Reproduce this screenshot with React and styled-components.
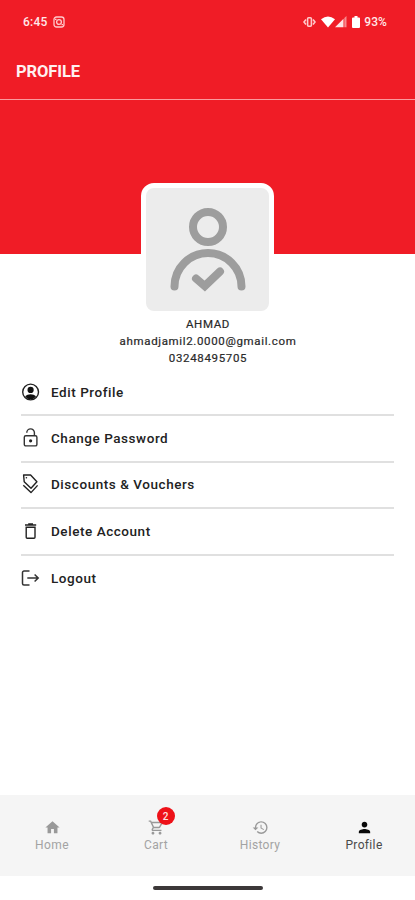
import React from 'react';
import styled, { createGlobalStyle } from 'styled-components';

const GlobalStyle = createGlobalStyle`
  * { box-sizing: border-box; }
  body { margin: 0; background: #fff; font-family: Roboto, sans-serif; }
`;

const Screen = styled.div`
  width: 415px;
  height: 900px;
  display: flex;
  flex-direction: column;
  background: #fff;
  overflow: hidden;
`;

const StatusBar = styled.div`
  height: 43px;
  flex: none;
  display: flex;
  align-items: center;
  justify-content: space-between;
  padding: 0 28px 0 23px;
  background: #f01c26;
  color: #ffe9e9;
  font-size: 12px;
  font-weight: 500;
`;

const StatusGroup = styled.div`
  display: flex;
  align-items: center;
`;

const StatusIcon = styled.svg`
  display: block;
  flex: none;
  margin-right: ${(p) => p.$gap || 0}px;
`;

const Clock = styled.span`
  letter-spacing: 0.2px;
  margin-right: 6px;
`;

const Battery = styled.span`
  letter-spacing: 0.1px;
`;

const Header = styled.header`
  height: 57px;
  flex: none;
  display: flex;
  align-items: center;
  padding: 1px 16px 0;
  background: #f01c26;
  border-bottom: 1px solid #fb9a9d;
`;

const Title = styled.h1`
  margin: 0;
  color: #fff0f0;
  font-size: 16.5px;
  line-height: 20px;
  font-weight: 700;
  letter-spacing: -0.1px;
`;

const Banner = styled.div`
  height: 154px;
  flex: none;
  background: #f01c26;
`;

const Identity = styled.section`
  display: flex;
  flex-direction: column;
  align-items: center;
  margin-top: -71px;
`;

const Avatar = styled.div`
  width: 133px;
  height: 133px;
  border: 5px solid #fff;
  border-radius: 13px;
  background: #ececec;
`;

const IdentityText = styled.p`
  margin: 0;
  padding-left: 1px;
  color: #2a2a2a;
  font-size: 11.5px;
  line-height: 17px;
  letter-spacing: ${(p) => p.$tracking}px;
  -webkit-text-stroke: 0.2px #2a2a2a;
`;

const Menu = styled.nav`
  display: flex;
  flex-direction: column;
  padding: 0 21px;
  margin-top: 3px;
`;

const MenuRow = styled.a`
  height: 46.4px;
  display: flex;
  align-items: center;
  gap: 11px;
  padding-bottom: 1px;
  color: #222;
  font-size: 13.5px;
  font-weight: 500;
  letter-spacing: 0.55px;
  border-bottom: ${(p) => (p.$last ? 'none' : '2px solid #e0e0e0')};
`;

const MenuIcon = styled.svg`
  width: 19px;
  height: 20px;
  flex: none;
  overflow: visible;
`;

const TabBar = styled.nav`
  height: 81px;
  flex: none;
  margin-top: auto;
  display: grid;
  grid-template-columns: repeat(4, 104px);
  background: #f5f5f5;
`;

const Tab = styled.a`
  display: flex;
  flex-direction: column;
  align-items: center;
  padding-top: 24px;
  color: ${(p) => (p.$active ? '#4a4a4a' : '#a3a3a3')};
  font-size: 12px;
  line-height: 16px;
  letter-spacing: ${(p) => p.$tracking}px;
`;

const TabIconWrap = styled.span`
  position: relative;
  height: 18px;
`;

const TabIcon = styled.svg`
  display: block;
  width: 17px;
  height: 17px;
  color: ${(p) => (p.$active ? '#080808' : '#999')};
`;

const Badge = styled.span`
  position: absolute;
  left: 9px;
  top: -12px;
  width: 18px;
  height: 18px;
  border-radius: 50%;
  background: #ee1118;
  color: #ffe0e0;
  font-size: 10px;
  font-weight: 500;
  line-height: 19px;
  letter-spacing: 0;
  text-align: center;
`;

const GestureArea = styled.div`
  height: 24px;
  flex: none;
  display: flex;
  align-items: center;
  justify-content: center;
`;

const GestureHandle = styled.div`
  width: 110px;
  height: 4px;
  border-radius: 2px;
  background: #3c3839;
`;

const menuItems = [
  {
    label: 'Edit Profile',
    icon: (
      <MenuIcon viewBox="0 0 19 20" fill="none">
        <circle cx="9.6" cy="10" r="7.9" stroke="#222" strokeWidth="1.4" />
        <circle cx="9.6" cy="7.9" r="3.1" fill="#111" />
        <path d="M4.2 14.2c1.3-1.3 3.2-2 5.4-2s4.1.7 5.4 2c-1.2 1.9-3.2 3.1-5.4 3.1s-4.2-1.2-5.4-3.1z" fill="#111" />
      </MenuIcon>
    ),
  },
  {
    label: 'Change Password',
    icon: (
      <MenuIcon viewBox="0 0 19 20" fill="none" stroke="#333" strokeWidth="1.4">
        <rect x="3.3" y="7.7" width="12.6" height="10.2" rx="1.5" />
        <path d="M5.8 4.8V4.5a3.8 3.6 0 0 1 7.6 0v3.2" />
        <circle cx="9.6" cy="12.8" r="1.6" fill="#222" stroke="none" />
      </MenuIcon>
    ),
  },
  {
    label: 'Discounts & Vouchers',
    icon: (
      <MenuIcon viewBox="0 0 19 20" fill="none" stroke="#222" strokeWidth="1.4" strokeLinejoin="round">
        <path d="M2.6 1h7l6.3 6.8-5.9 6.4-6.8-6.5z" />
        <path d="M2.3 11.2l7.7 7.4 6.6-7.2" />
        <circle cx="5.4" cy="3.7" r=".8" fill="#222" stroke="none" />
      </MenuIcon>
    ),
  },
  {
    label: 'Delete Account',
    icon: (
      <MenuIcon viewBox="0 0 19 20" fill="none" stroke="#222" strokeWidth="1.4">
        <path d="M4 4h11.2M7.2 3h4.8" />
        <path d="M5.2 6.3h8.8v9.9a1 1 0 0 1-1 1H6.2a1 1 0 0 1-1-1z" />
      </MenuIcon>
    ),
  },
  {
    label: 'Logout',
    icon: (
      <MenuIcon viewBox="0 0 19 20" fill="none" stroke="#333" strokeWidth="1.5">
        <path d="M8.5 3H3a1.5 1.5 0 0 0-1.5 1.5v11A1.5 1.5 0 0 0 3 17h5.5" />
        <path d="M6.3 10h10.7M13.6 6.5l3.6 3.5-3.6 3.5" />
      </MenuIcon>
    ),
  },
];

const tabs = [
  {
    label: 'Home',
    tracking: 0.4,
    path: 'M10 20v-6h4v6h5v-8h3L12 3 2 12h3v8z',
  },
  {
    label: 'Cart',
    tracking: 0.3,
    badge: 2,
    path: 'M15.55 13c.75 0 1.41-.41 1.75-1.03l3.58-6.49A.996.996 0 0 0 20.01 4H5.21l-.94-2H1v2h2l3.6 7.59-1.35 2.44C4.52 15.37 5.48 17 7 17h12v-2H7l1.1-2h7.45zM6.16 6h12.15l-2.76 5H8.53L6.16 6zM7 18c-1.1 0-1.99.9-1.99 2S5.9 22 7 22s2-.9 2-2-.9-2-2-2zm10 0c-1.1 0-1.99.9-1.99 2s.89 2 1.99 2 2-.9 2-2-.9-2-2-2z',
  },
  {
    label: 'History',
    tracking: 0.3,
    path: 'M13 3a9 9 0 0 0-9 9H1l3.89 3.89.07.14L9 12H6c0-3.87 3.13-7 7-7s7 3.13 7 7-3.13 7-7 7c-1.93 0-3.68-.79-4.94-2.06l-1.42 1.42A8.954 8.954 0 0 0 13 21a9 9 0 0 0 0-18zm-1 5v5l4.28 2.54.72-1.21-3.5-2.08V8z',
  },
  {
    label: 'Profile',
    tracking: 0.35,
    active: true,
    path: 'M12 12c2.21 0 4-1.79 4-4s-1.79-4-4-4-4 1.79-4 4 1.79 4 4 4zm0 2c-2.67 0-8 1.34-8 4v2h16v-2c0-2.66-5.33-4-8-4z',
  },
];

export default function App() {
  return (
    <>
      <GlobalStyle />
      <Screen>
        <StatusBar>
          <StatusGroup>
            <Clock>6:45</Clock>
            <StatusIcon width="12" height="12" viewBox="0 0 12 12" fill="none" stroke="#ffc9cb" strokeWidth="1.3">
              <rect x="1" y="1" width="10" height="10" rx="2.5" />
              <circle cx="6" cy="6" r="2.4" />
              <path d="M2 3.4h1.5M8.5 8.6H10" />
            </StatusIcon>
          </StatusGroup>
          <StatusGroup>
            <StatusIcon $gap={5} width="13" height="12" viewBox="0 0 13 12" fill="none" stroke="#ffc9cb" strokeWidth="1.6">
              <rect x="4.6" y="1.7" width="3.8" height="8.6" rx="1" />
              <path d="M3 3.5L1 6l2 2.5M10 3.5L12 6l-2 2.5" />
            </StatusIcon>
            <StatusIcon width="14" height="12" viewBox="0 0 14 12" fill="#fff">
              <path d="M0 3.2Q7-2 14 3.2L7 11.5z" />
            </StatusIcon>
            <StatusIcon $gap={5} width="12" height="12" viewBox="0 0 12 12" fill="#ffe4e4">
              <path d="M0 11.3L8.5 2.8v8.5z" />
              <path d="M9.3 2L11.5 0v11.3H9.3z" opacity=".55" />
            </StatusIcon>
            <StatusIcon $gap={4} width="8" height="12" viewBox="0 0 8 12" fill="#fff">
              <path d="M2.5 0h3v1.5H7a1 1 0 0 1 1 1V11a1 1 0 0 1-1 1H1a1 1 0 0 1-1-1V2.5a1 1 0 0 1 1-1h1.5z" />
            </StatusIcon>
            <Battery>93%</Battery>
          </StatusGroup>
        </StatusBar>

        <Header>
          <Title>PROFILE</Title>
        </Header>
        <Banner />

        <Identity>
          <Avatar>
            <svg width="123" height="123" viewBox="0 0 123 123" fill="none" stroke="#9d9d9d" strokeWidth="8" strokeLinecap="round">
              <circle cx="62" cy="39" r="15" />
              <path d="M28.5 98.5a33.5 33.5 0 0 1 67 0" />
              <path d="M50 90.5l8.8 7.5 15.2-14.5" strokeLinejoin="miter" />
            </svg>
          </Avatar>
          <IdentityText $tracking={0.65}>AHMAD</IdentityText>
          <IdentityText $tracking={0.65}>ahmadjamil2.0000@gmail.com</IdentityText>
          <IdentityText $tracking={0.67}>03248495705</IdentityText>
        </Identity>

        <Menu>
          {menuItems.map((item, i) => (
            <MenuRow key={item.label} $last={i === menuItems.length - 1}>
              {item.icon}
              <span>{item.label}</span>
            </MenuRow>
          ))}
        </Menu>

        <TabBar>
          {tabs.map((tab) => (
            <Tab key={tab.label} $active={tab.active} $tracking={tab.tracking}>
              <TabIconWrap>
                <TabIcon viewBox="0 0 24 24" fill="currentColor" $active={tab.active}>
                  <path d={tab.path} />
                </TabIcon>
                {tab.badge && <Badge>{tab.badge}</Badge>}
              </TabIconWrap>
              <span>{tab.label}</span>
            </Tab>
          ))}
        </TabBar>
        <GestureArea>
          <GestureHandle />
        </GestureArea>
      </Screen>
    </>
  );
}
